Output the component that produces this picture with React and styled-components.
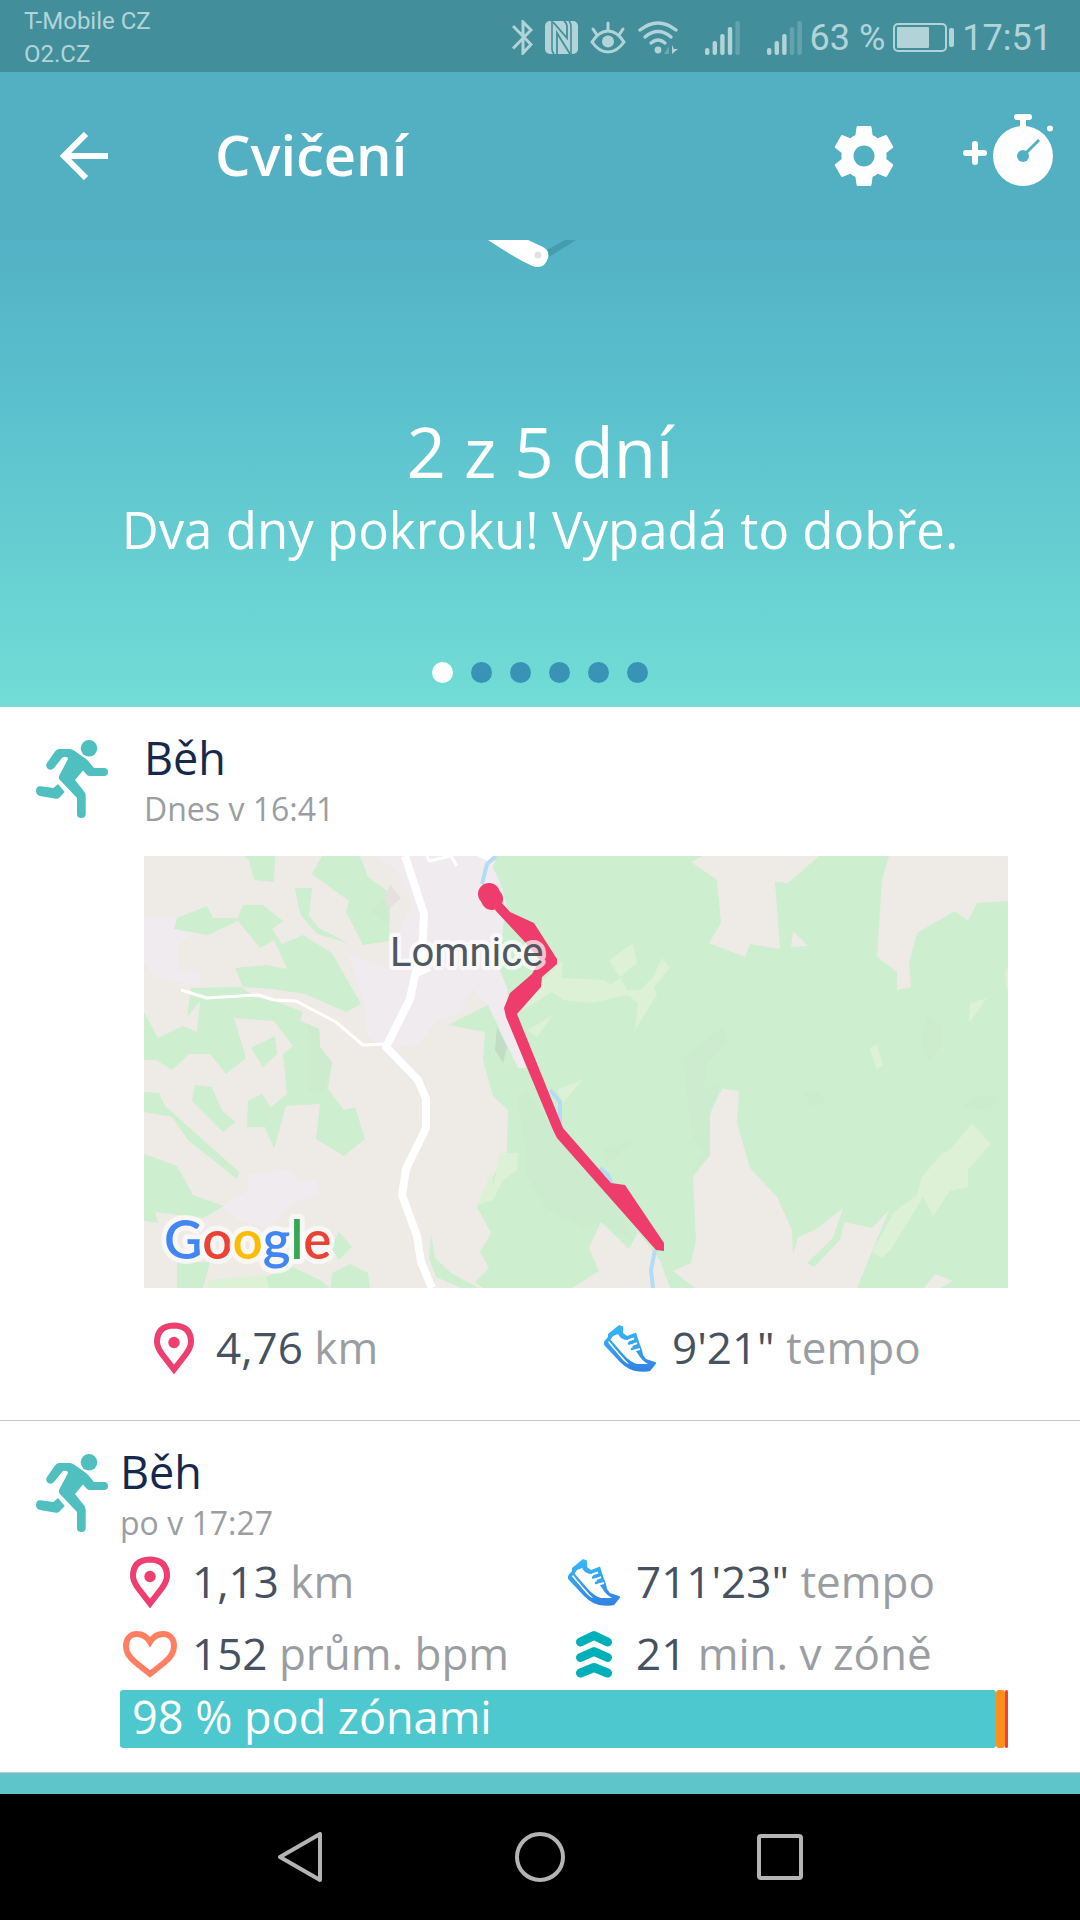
import React from "react";
import styled, { createGlobalStyle } from "styled-components";

const GlobalStyle = createGlobalStyle`
  * {
    box-sizing: border-box;
  }

  body {
    margin: 0;
    font-family: "Open Sans", "Noto Sans", sans-serif;
    background-color: #5ec5cb;
  }

  h1, h2, p {
    margin: 0;
    font-weight: 400;
  }

  svg {
    display: block;
    flex-shrink: 0;
  }

  button {
    display: flex;
    padding: 0;
    border: none;
    background: none;
    color: inherit;
    font: inherit;
    cursor: pointer;
  }
`;

const Page = styled.div`
  display: flex;
  flex-direction: column;
  min-height: 100vh;
`;

const StatusBar = styled.div`
  display: flex;
  align-items: center;
  justify-content: space-between;
  height: 72px;
  padding: 3px 28px 0 24px;
  background-color: #428f9b;
  color: #b2d4d9;
  font-family: Roboto, sans-serif;
`;

const Carriers = styled.div`
  font-size: 24px;
  line-height: 33px;
`;

const StatusIcons = styled.div`
  display: flex;
  align-items: center;
  gap: 8px;
  font-size: 36px;
  line-height: 48px;
`;

const IconGroup = styled.div`
  display: flex;
  align-items: center;
  gap: ${({ $gap }) => $gap}px;
`;

const Header = styled.header`
  display: flex;
  align-items: center;
  height: 168px;
  padding: 0 27px 0 60px;
  background-color: #53b0c3;
  color: #ffffff;

  h1 {
    margin-left: 107px;
    padding-bottom: 4px;
    font-size: 56px;
    font-weight: 600;
    line-height: 72px;
  }
`;

const Actions = styled.div`
  display: flex;
  align-items: center;
  gap: 63px;
  margin-left: auto;
`;

const Hero = styled.section`
  display: flex;
  flex-direction: column;
  align-items: center;
  padding-bottom: 24px;
  background: linear-gradient(#53b2c5 0%, #5bc0cd 35%, #71ddd6 100%);
  color: #ffffff;
  text-align: center;

  h2 {
    margin-top: 141px;
    font-size: 69px;
    line-height: 84px;
  }

  p {
    margin-top: 4px;
    font-size: 51px;
    line-height: 64px;
  }
`;

const Dots = styled.div`
  display: flex;
  gap: 18px;
  margin-top: 101px;
`;

const Dot = styled.button`
  width: 21px;
  height: 21px;
  border-radius: 50%;
  background-color: ${({ $active }) => ($active ? "#ffffff" : "#3893b7")};
`;

const Card = styled.article`
  display: flex;
  padding: 23px 72px ${({ $bottom }) => $bottom}px 0;
  border-bottom: 1px solid #c8c9cb;
  background-color: #ffffff;
`;

const CardIcon = styled.div`
  flex-shrink: 0;
  width: ${({ $width }) => $width}px;
  padding: 10px 0 0 36px;
`;

const CardBody = styled.div`
  flex: 1;
  min-width: 0;

  h2 {
    color: #16294d;
    font-size: 45px;
    line-height: 56px;
  }
`;

const Time = styled.p`
  color: #9a9ea4;
  font-size: 32px;
  line-height: 46px;
`;

const MapBox = styled.div`
  margin: 24px 0 30px;

  svg {
    width: 100%;
    height: auto;
  }
`;

const Stats = styled.div`
  display: grid;
  grid-template-columns: 1fr 1fr;
  grid-auto-rows: ${({ $row }) => $row}px;
  column-gap: ${({ $gap }) => $gap}px;
`;

const StatItem = styled.div`
  display: flex;
  align-items: center;
  gap: 12px;
  color: #9a9ea3;
  font-size: 44px;
  line-height: 56px;
  white-space: nowrap;

  strong {
    color: #465161;
    font-weight: 500;
  }
`;

const StatIcon = styled.span`
  display: flex;
  justify-content: center;
  width: 60px;
`;

const StatText = styled.span`
  padding-bottom: 3px;
`;

const ZoneBar = styled.div`
  display: flex;
  height: 58px;
`;

const Zone = styled.div`
  flex: ${({ $share }) => $share};
  padding-left: ${({ $label }) => ($label ? 12 : 0)}px;
  border-radius: 3px;
  background-color: ${({ $color }) => $color};
  color: #ffffff;
  font-size: 45px;
  line-height: 54px;
  white-space: nowrap;
`;

const Strip = styled.div`
  flex: 1;
  min-height: 21px;
`;

const NavBar = styled.nav`
  display: flex;
  align-items: center;
  justify-content: center;
  gap: 190px;
  height: 126px;
  background-color: #000000;
`;

function BluetoothIcon() {
  return (
    <svg width="21" height="35" viewBox="0 0 21 35" fill="none" stroke="currentColor" strokeWidth="3">
      <path d="M1 6 L19 24.500 L11 33 V2 L19 10 L1 28.500" />
    </svg>
  );
}

function NfcIcon() {
  return (
    <svg width="33" height="33" viewBox="0 0 33 33">
      <rect width="33" height="33" rx="5" fill="currentColor" />
      <path d="M7 0 V28 Q7 31 9 33 M26 33 V6 Q26 2 24 0" fill="none" stroke="#428f9b" strokeWidth="1.600" />
      <path d="M8 1 L22 17 V5 Q22 2 19 0 M12 33 V12 L25 33" fill="none" stroke="#428f9b" strokeWidth="1.800" />
    </svg>
  );
}

function EyeIcon() {
  return (
    <svg width="36" height="33" viewBox="0 0 36 33" fill="none" stroke="currentColor" strokeWidth="3" strokeLinecap="round">
      <path d="M2 21 Q9 10 18 10 T34 21 Q27 31 18 31 T2 21 Z" />
      <path d="M18 2 V9 M3 8 L7 14 M33 8 L29 14" />
      <circle cx="18" cy="20.500" r="6" fill="currentColor" stroke="none" />
    </svg>
  );
}

function WifiIcon() {
  return (
    <svg width="40" height="34" viewBox="0 0 40 34" fill="none" stroke="currentColor" strokeWidth="3.400" strokeLinecap="round">
      <path d="M2 9 Q20 -5 38 9" />
      <path d="M7 16 Q20 5 33 16" />
      <path d="M13 22 Q20 16 27 22" />
      <circle cx="20" cy="29" r="3.400" fill="currentColor" stroke="none" />
      <path d="M31 25 V33 H26 Z" fill="#6aa9b3" stroke="none" />
      <path d="M34 24 V33 L40 28 H36 Z" fill="currentColor" stroke="none" />
    </svg>
  );
}

function SignalIcon({ level }) {
  return (
    <svg width="35" height="34" viewBox="0 0 35 34" fill="currentColor">
      {[7, 14, 21, 28, 34].map((height, i) => (
        <rect key={height} x={i * 7.6} y={34 - height} width="4.400" height={height} rx="2" opacity={i < level ? 1 : 0.3} />
      ))}
    </svg>
  );
}

function BatteryIcon() {
  return (
    <svg width="61" height="30" viewBox="0 0 61 30">
      <rect x="1" y="1" width="52" height="27" rx="4" fill="none" stroke="currentColor" strokeWidth="2" />
      <rect x="4" y="4" width="32" height="21" rx="1" fill="currentColor" />
      <rect x="56" y="5" width="5" height="19" rx="2" fill="currentColor" />
    </svg>
  );
}

function BackIcon() {
  return (
    <svg width="48" height="48" viewBox="0 0 48 48" fill="none" stroke="currentColor" strokeWidth="6">
      <path d="M26 2 L4 24 L26 46 M4 24 H48" />
    </svg>
  );
}

function GearIcon() {
  return (
    <svg width="72" height="72" viewBox="0 0 24 24" fill="currentColor">
      <path d="M19.430 12.980c.040-.320.070-.640.070-.980s-.030-.660-.070-.980l2.110-1.650c.190-.150.240-.420.120-.640l-2-3.460c-.120-.220-.390-.300-.610-.220l-2.490 1c-.520-.400-1.080-.730-1.690-.980l-.380-2.650C14.460 2.180 14.250 2 14 2h-4c-.250 0-.460.180-.490.420l-.380 2.650c-.610.250-1.170.590-1.690.980l-2.490-1c-.230-.090-.490 0-.610.220l-2 3.460c-.130.220-.070.490.120.640l2.110 1.650c-.040.320-.070.650-.070.980s.030.660.070.980l-2.110 1.650c-.190.150-.240.420-.120.640l2 3.460c.120.220.390.300.610.220l2.490-1c.520.400 1.080.730 1.690.980l.380 2.650c.030.240.240.420.490.420h4c.250 0 .460-.180.490-.420l.380-2.650c.610-.250 1.170-.590 1.690-.980l2.490 1c.230.090.490 0 .610-.220l2-3.460c.120-.220.070-.490-.120-.640l-2.110-1.650zM12 15.500c-1.930 0-3.500-1.570-3.500-3.500s1.570-3.500 3.500-3.500 3.500 1.570 3.500 3.500-1.570 3.500-3.500 3.500z" />
    </svg>
  );
}

function StopwatchIcon() {
  return (
    <svg width="90" height="84" viewBox="0 0 90 84" fill="currentColor">
      <path d="M12 30 V48 M3 39 H21" stroke="currentColor" strokeWidth="6" strokeLinecap="round" />
      <rect x="51" y="0" width="18" height="6" rx="3" />
      <rect x="57" y="4" width="6" height="12" />
      <circle cx="60" cy="42" r="30" />
      <circle cx="87" cy="14.500" r="3" />
      <circle cx="60" cy="42" r="6" fill="#53b0c3" />
      <path d="M61 41 L76 26" stroke="#53b0c3" strokeWidth="3" />
    </svg>
  );
}

function Needle() {
  return (
    <svg width="104" height="28" viewBox="0 0 104 28">
      <path d="M59 10 L77 0 H88 L61 17 Z" fill="#459cac" />
      <path d="M0 0 H40 L55 7 Q62 11 60 18 Q57 28 48 27 Q38 25 0 0 Z" fill="#ffffff" />
      <circle cx="50" cy="15" r="3.500" fill="#e2e2e2" />
    </svg>
  );
}

function RunnerIcon() {
  return (
    <svg width="72" height="78" viewBox="0 0 72 78" fill="#4fbfbf">
      <circle cx="53" cy="8.300" r="8.300" />
      <path d="M23 9 H34 Q36 9 38 10.500 L50 19 Q52 20.500 53 22 L58 28 H68 Q72 28 72 32 T68 36 H54 Q52 36 51 35 L47 30.500 L39 40 L48.500 52 Q49.700 53.500 49.700 56 V74 Q49.700 78 45.300 78 T41 74 V58 L24 40 Q22 38 23.500 35 L32 19 Q32 17 30 17 Q28 16 26 18 L18 28 Q15 31 12 29 Q9 26 11 23 L19 11.500 Q20.500 9 23 9 Z" />
      <path d="M4.500 46.300 L17.500 48 L22 44 L28.700 52 L23 58 Q22 59 20 58.700 L4 56 Q0 55 0 51 Q0 46 4.500 46.300 Z" />
    </svg>
  );
}

function PinIcon() {
  return (
    <svg width="40" height="52" viewBox="0 0 40 52">
      <path d="M20 3.500 Q37 4 37 20 Q37 25 32 32 L20 47.500 L8 32 Q3 25 3 20 Q3 4 20 3.500 Z" fill="none" stroke="#ee3f70" strokeWidth="6" />
      <circle cx="20" cy="20.500" r="5.700" fill="#ee3f70" />
    </svg>
  );
}

function ShoeIcon() {
  return (
    <svg width="54" height="48" viewBox="0 0 54 48">
      <defs>
        <linearGradient id="shoe" x1="0" y1="0" x2="0" y2="1">
          <stop offset="0" stopColor="#36b9fb" />
          <stop offset="1" stopColor="#3282e2" />
        </linearGradient>
      </defs>
      <path
        fill="url(#shoe)"
        fillRule="evenodd"
        d="M16 1 L20 2.500 V9 L24 12 L33 8.500 L35 15 L37 21 L39 26 L40 31 L43 35 L52 38 Q54 39 52 41 L47 47 Q44 48 36 47.500 Q26 47 17 38 L2 22 Q0 20 1.500 17 L5 13 V10 Z
        M10 12 L7.500 15.500 L20 30 Q27 38 34 40 L45 40 Q39 37 35 30 L25 16 Q18 16 15 10 Z
        M5 18.500 L20 36 Q24 40 26 40 Q18 32 6 17 Z"
      />
      <path d="M25 16.500 L31 14.500 M28 21.500 L34 19 M31 26.500 L37 25" stroke="#ffffff" strokeWidth="2" />
      <path d="M26 19.500 L34 16.500 M29 25 L36 22" stroke="#36a5f3" strokeWidth="2.500" strokeLinecap="round" />
    </svg>
  );
}

function HeartIcon() {
  return (
    <svg width="54" height="48" viewBox="0 0 54 48" fill="none" stroke="#ff7f62" strokeWidth="6">
      <path d="M27 12 C24 7 19 4 14 4 C7 4 3 9 3 16 C3 22 6 27 12 32 L27 44 L42 32 C48 27 51 22 51 16 C51 9 47 4 40 4 C35 4 30 7 27 12 Z" />
    </svg>
  );
}

function ZoneIcon() {
  return (
    <svg width="36" height="48" viewBox="0 0 36 48" fill="none" stroke="#00b0b9" strokeWidth="9" strokeLinecap="round" strokeLinejoin="round">
      <path d="M4.500 12 L18 5.500 L31.500 12 M4.500 27.500 L18 21.500 L31.500 27.500 M4.500 43 L18 37.500 L31.500 43" />
    </svg>
  );
}

const STAT_ICONS = { pin: PinIcon, shoe: ShoeIcon, heart: HeartIcon, zone: ZoneIcon };

function Stat({ icon, value, unit }) {
  const Icon = STAT_ICONS[icon];

  return (
    <StatItem>
      <StatIcon>
        <Icon />
      </StatIcon>
      <StatText>
        <strong>{value}</strong> {unit}
      </StatText>
    </StatItem>
  );
}

const TOWNS = [
  "231,0 352,0 349,11 363,51 356,114 364,134 382,212 374,212 344,149 328,132 314,158 292,165 276,187 245,193 223,180 221,150 204,98 245,113 245,91 257,69 269,47 252,13",
  "0,61 35,61 49,76 33,91 35,113 57,117 56,130 11,122 0,106",
  "104,319 145,313 152,324 173,324 176,339 149,347 125,372 97,365 76,350 104,335",
];

const FORESTS = [
  "352,0 349,11 356,26 363,51 359,71 356,114 364,134 363,150 382,212 374,212 344,149 304,169 341,176 339,204 349,240 364,254 363,294 333,351 347,377 336,396 345,412 331,426 339,432 428,432 455,415 445,392 457,366 485,393 494,376 516,404 526,432 551,432 529,415 547,407 552,384 549,321 566,299 566,257 578,233 595,235 593,267 606,312 633,341 648,374 649,399 654,381 671,374 699,352 689,382 663,407 670,411 696,384 700,366 728,372 745,354 713,432 780,432 791,418 809,425 796,432 864,432 864,45 833,47 824,65 811,55 773,77 765,107 767,131 753,134 753,116 733,101 738,24 745,0 675,0 644,27 631,26 636,93 606,88 601,101 565,87 577,67 573,24 547,6 559,0",
  "100,0 131,0 130,26 110,24 105,4",
  "178,0 216,0 224,21 246,37 245,85 219,89 202,56 205,45 168,18",
  "33,62 63,50 69,62 94,62 99,49 119,49 139,65 128,73 138,88 159,79 188,97 217,148 202,156 161,138 128,133 99,131 91,112 123,109 143,113 130,84 116,92 94,65 64,79 30,73",
  "151,32 168,32 165,60 175,72 204,87 173,78 156,58",
  "47,132 97,131 111,141 131,145 159,156 156,165 175,173 176,191 188,206 184,233 200,254 211,251 221,283 200,300 172,283 176,248 142,250 130,293 121,271 103,271 104,245 118,238 127,251 143,238 139,198 149,190 130,165 90,162 102,202 82,218 66,198 45,198 28,214 12,204 0,204 0,156 14,182 39,170 53,176 56,145 43,161",
  "107,192 131,180 133,198 119,211",
  "51,229 68,231 78,255 92,266 79,276 48,245",
  "0,236 15,237 21,250 95,316 93,323 44,284 28,261 0,256",
  "0,298 6,300 33,310 49,339 80,350 59,362 11,356 14,367 0,365",
  "33,406 66,406 59,432 33,432",
  "149,411 176,424 186,432 125,432 121,421",
  "188,417 206,408 224,417 226,432 187,432",
  "195,376 208,391 195,404 187,391",
  "287,378 291,402 307,417 335,432 317,432 292,421 285,402",
];

const MEADOWS = [
  "419,104 418,122 461,124 466,129 476,122 465,104 489,87 493,107 476,121 483,134 496,134 509,121 518,102 526,112 510,131 513,139 491,174 494,147 483,139 449,147 419,144 408,136 379,154 396,127",
  "409,159 393,181 383,174",
  "439,223 419,247 413,234",
  "356,297 374,297 373,314 359,324 349,344 333,349 348,314 349,331",
  "828,267 847,288 824,314 824,331 806,335 789,360 779,341 748,392 738,402 728,396 750,356 773,339 778,321 798,297 806,294",
  "826,147 843,142 825,167",
  "726,193 733,188 739,209 733,214",
  "864,109 861,117 863,134 864,134",
  "66,424 121,419 125,432 62,432",
];

const SHADES = [
  "579,171 583,187 564,206 558,235 576,229 566,259 565,299 548,317 560,296 548,279 539,202",
  "784,160 796,169 799,186 786,206 776,184",
  "658,236 673,236 682,246 668,250",
  "818,251 834,239 856,241 844,255",
  "373,244 383,235 416,284 470,345 490,385 457,366 440,372 402,352 383,320 382,290",
  "459,294 493,284 461,309",
  "164,168 175,173 176,191 188,206 180,235 165,235",
  "227,56 246,37 245,68",
];

const GOOGLE = [
  ["G", "#4285f4"],
  ["o", "#ea4335"],
  ["o", "#fbbc05"],
  ["g", "#4285f4"],
  ["l", "#34a853"],
  ["e", "#ea4335"],
];

function RouteMap() {
  return (
    <svg viewBox="0 0 864 432" role="img" aria-label="Lomnice">
      <rect width="864" height="432" fill="#eeebe6" />
      {TOWNS.map((points) => (
        <polygon key={points} points={points} fill="#efebef" />
      ))}
      {FORESTS.map((points) => (
        <polygon key={points} points={points} fill="#cdeecf" />
      ))}
      {MEADOWS.map((points) => (
        <polygon key={points} points={points} fill="#dcf1d5" />
      ))}
      {SHADES.map((points) => (
        <polygon key={points} points={points} fill="#cdebce" />
      ))}
      <polygon points="353,171 363,191 359,207 351,194" fill="#c3dcc5" />
      <polygon points="649,75 664,90 647,91" fill="#eeebe6" />
      <polygon points="246,28 257,42 246,52 240,44" fill="#e6e1de" />

      <g fill="none" stroke="#ffffff" strokeLinejoin="round">
        <path d="M261 0 L280 58 L278 100 L271 119 L266 143 L242 191 L274 224 L282 243 L282 272 L262 313 L258 339 L273 380 L277 406 L288 432" strokeWidth="8" />
        <path d="M271 119 L286 112" strokeWidth="6" />
        <path d="M37 134 L63 142 L114 139 L130 144 L152 145 L192 166 L219 189 L242 188" strokeWidth="3" />
        <path d="M283 0 L285 5 L307 0 L313 10" strokeWidth="3" />
      </g>
      <polygon points="333,0 344,5 353,0" fill="#ffffff" />
      <g fill="none" stroke="#b2dbf5" strokeWidth="4">
        <path d="M352 0 L343 8 L338 28" />
        <path d="M406 234 L416 246 V267" />
        <path d="M456 312 L464 319 L468 328" />
        <path d="M511 394 L507 414 L509 432" />
      </g>

      <g fill="#ee3d6c">
        <polygon points="358,47 366,56 390,67 413,103 413,108 398,121 397,131 373,158 419,272 467,327 481,329 520,387 520,395 512,394 413,282 409,274 362,161 360,152 366,137 388,118 396,104 379,84 351,54" />
        <circle cx="345" cy="38" r="11" />
        <circle cx="348" cy="43" r="11" />
      </g>

      <text
        x="246"
        y="110"
        fontFamily="Roboto, sans-serif"
        fontSize="40"
        fill="#50575f"
        stroke="#ffffff"
        strokeOpacity="0.7"
        strokeWidth="8"
        strokeLinejoin="round"
        paintOrder="stroke"
      >
        Lomnice
      </text>
      <text
        x="20"
        y="403"
        fontFamily="Lato, sans-serif"
        fontSize="53"
        fontWeight="600"
        stroke="#ffffff"
        strokeOpacity="0.6"
        strokeWidth="10"
        strokeLinejoin="round"
        paintOrder="stroke"
      >
        {GOOGLE.map(([letter, color], i) => (
          <tspan key={i} fill={color}>
            {letter}
          </tspan>
        ))}
      </text>
    </svg>
  );
}

const ZONES = [
  { share: 876, color: "#4dc8cf", label: "98 % pod zónami" },
  { share: 9, color: "#ff8f1c" },
  { share: 3, color: "#f0413c" },
];

export default function App() {
  return (
    <Page>
      <GlobalStyle />
      <StatusBar>
        <Carriers>
          <div>T-Mobile CZ</div>
          <div>O2.CZ</div>
        </Carriers>
        <StatusIcons>
          <IconGroup $gap={27}>
            <IconGroup $gap={12}>
              <BluetoothIcon />
              <NfcIcon />
              <EyeIcon />
              <WifiIcon />
            </IconGroup>
            <SignalIcon level={4} />
            <SignalIcon level={3} />
          </IconGroup>
          <span>63 %</span>
          <BatteryIcon />
          <span>17:51</span>
        </StatusIcons>
      </StatusBar>

      <Header>
        <button type="button" aria-label="Zpět">
          <BackIcon />
        </button>
        <h1>Cvičení</h1>
        <Actions>
          <button type="button" aria-label="Nastavení">
            <GearIcon />
          </button>
          <button type="button" aria-label="Přidat cvičení">
            <StopwatchIcon />
          </button>
        </Actions>
      </Header>

      <Hero>
        <Needle />
        <h2>2 z 5 dní</h2>
        <p>Dva dny pokroku! Vypadá to dobře.</p>
        <Dots>
          {[1, 2, 3, 4, 5, 6].map((page) => (
            <Dot key={page} type="button" aria-label={`Strana ${page}`} $active={page === 1} />
          ))}
        </Dots>
      </Hero>

      <Card $bottom={42}>
        <CardIcon $width={144}>
          <RunnerIcon />
        </CardIcon>
        <CardBody>
          <h2>Běh</h2>
          <Time>Dnes v 16:41</Time>
          <MapBox>
            <RouteMap />
          </MapBox>
          <Stats $row={60} $gap={48}>
            <Stat icon="pin" value="4,76" unit="km" />
            <Stat icon="shoe" value={"9'21\""} unit="tempo" />
          </Stats>
        </CardBody>
      </Card>

      <Card $bottom={24}>
        <CardIcon $width={120}>
          <RunnerIcon />
        </CardIcon>
        <CardBody>
          <h2>Běh</h2>
          <Time>po v 17:27</Time>
          <Stats $row={72} $gap={0}>
            <Stat icon="pin" value="1,13" unit="km" />
            <Stat icon="shoe" value={"711'23\""} unit="tempo" />
            <Stat icon="heart" value="152" unit="prům. bpm" />
            <Stat icon="zone" value="21" unit="min. v zóně" />
          </Stats>
          <ZoneBar>
            {ZONES.map(({ share, color, label }) => (
              <Zone key={color} $share={share} $color={color} $label={label}>
                {label}
              </Zone>
            ))}
          </ZoneBar>
        </CardBody>
      </Card>

      <Strip />

      <NavBar>
        <button type="button" aria-label="Zpět">
          <svg width="50" height="50" viewBox="0 0 50 50" fill="none" stroke="#b4b4b4" strokeWidth="4" strokeLinejoin="round">
            <path d="M45 2 V48 L5 25 Z" />
          </svg>
        </button>
        <button type="button" aria-label="Domů">
          <svg width="50" height="50" viewBox="0 0 50 50" fill="none" stroke="#b4b4b4" strokeWidth="4">
            <circle cx="25" cy="25" r="23" />
          </svg>
        </button>
        <button type="button" aria-label="Poslední aplikace">
          <svg width="50" height="50" viewBox="0 0 50 50" fill="none" stroke="#b4b4b4" strokeWidth="4">
            <rect x="4" y="4" width="42" height="42" rx="2" />
          </svg>
        </button>
      </NavBar>
    </Page>
  );
}
